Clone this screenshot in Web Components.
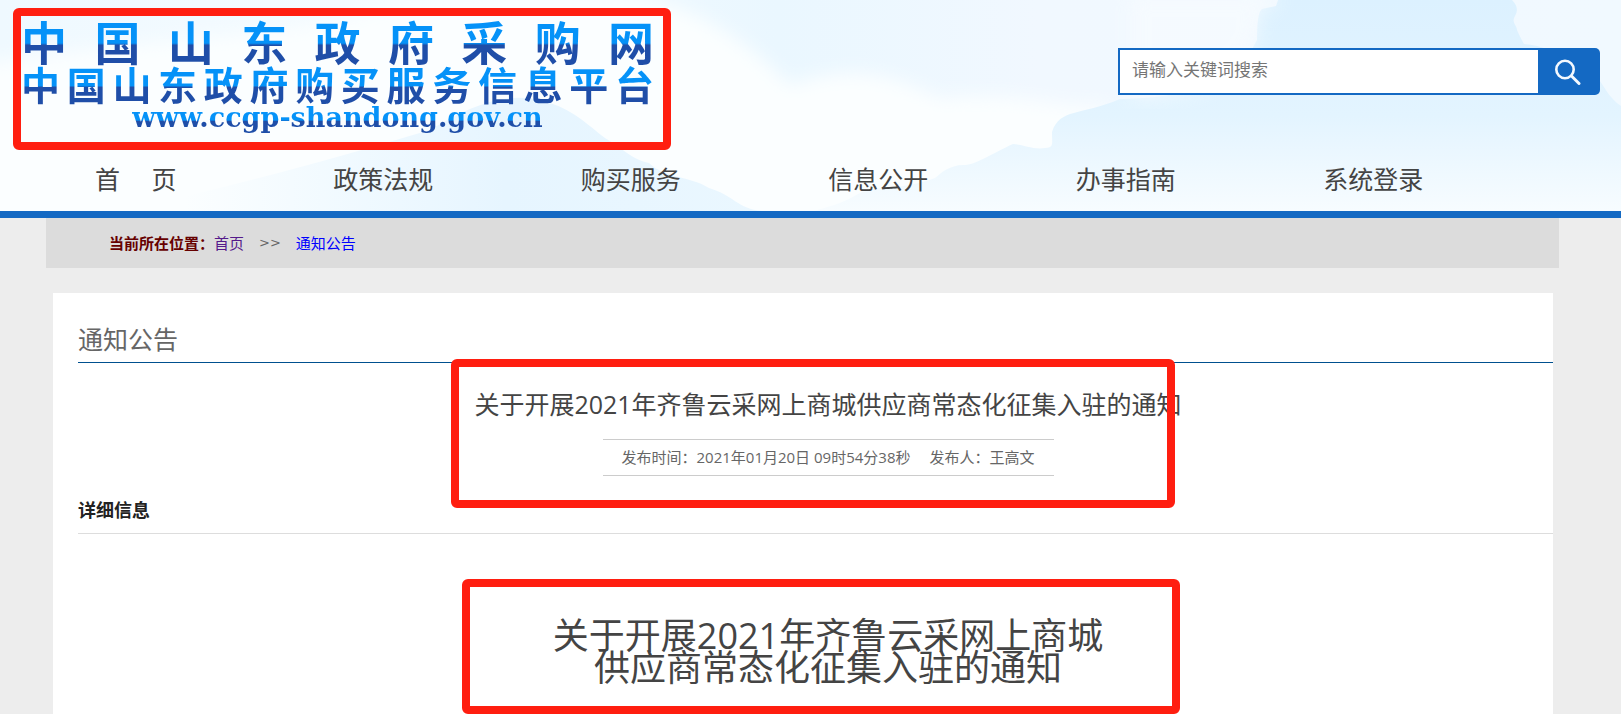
<!DOCTYPE html>
<html lang="zh-CN">
<head>
<meta charset="utf-8">
<title>中国山东政府采购网</title>
<style>
    body {
        margin: 0;
        background: #ededed;
        color: #444;
        font-family: "Open Sans", "Noto Sans CJK SC", sans-serif;
        font-size: 15px;
    }
</style>
</head>
<body>
<procurement-page></procurement-page>

<script>
class CalloutFrame extends HTMLElement {
    constructor() {
        super();
        this.attachShadow({ mode: 'open' });
        this.shadowRoot.innerHTML = `
            <style>
                :host {
                    display: block;
                    box-sizing: border-box;
                    position: absolute;
                    border: 8px solid #ff1e10;
                    border-radius: 6px;
                    pointer-events: none;
                }
            </style>
        `;
    }
}

class SkyBackdrop extends HTMLElement {
    constructor() {
        super();
        this.attachShadow({ mode: 'open' });
        this.shadowRoot.innerHTML = `
            <style>
                :host { display: block; position: absolute; inset: 0; overflow: hidden; }
                svg { display: block; width: 100%; height: 100%; }
            </style>
            <svg viewBox="0 0 1621 211" preserveAspectRatio="none" aria-hidden="true">
                <defs>
                    <linearGradient id="sky" x1="0" x2="1" y1="0" y2="0">
                        <stop offset="0" stop-color="#eff9ff"/>
                        <stop offset="0.25" stop-color="#f5fbff"/>
                        <stop offset="0.48" stop-color="#eaf7ff"/>
                        <stop offset="0.64" stop-color="#f1f8ff"/>
                        <stop offset="1" stop-color="#f1f9ff"/>
                    </linearGradient>
                    <linearGradient id="hill" x1="0" x2="0" y1="0" y2="1">
                        <stop offset="0" stop-color="#dcf1ff"/>
                        <stop offset="0.55" stop-color="#e3f4ff"/>
                        <stop offset="1" stop-color="#f7fcff"/>
                    </linearGradient>
                    <linearGradient id="slope" x1="0" x2="1" y1="0" y2="0">
                        <stop offset="0.1" stop-color="#e6f5ff" stop-opacity="0"/>
                        <stop offset="0.6" stop-color="#e6f5ff"/>
                        <stop offset="1" stop-color="#eaf7ff"/>
                    </linearGradient>
                    <filter id="soft"><feGaussianBlur stdDeviation="9"/></filter>
                </defs>
                <rect width="1621" height="211" fill="url(#sky)"/>
                <path d="M-60 70C120 40 230 40 330 22C450 -10 560 -20 650 0C710 15 750 45 790 85C860 60 900 80 940 98C1020 90 1060 110 1110 105L1080 240H-60Z" fill="#fbfeff" filter="url(#soft)"/>
                <path d="M120 211C220 190 330 160 430 130C470 105 510 90 545 102C570 107 588 125 605 138C625 150 633 160 649 163C664 178 690 176 709 188C733 195 738 209 762 211Z" fill="url(#slope)"/>
                <path d="M1278 0L1276 6L1262 9Q1257 12 1257 40L1252 49C1220 92 1170 98 1120 99C1080 116 1060 108 1052 132C1052 145 1054 147 1045 148C1033 150 1022 144 1013 144C991 154 979 163 966 165C950 164 941 173 935 178C900 191 880 184 858 194C840 205 825 207 815 211H1621V106C1600 91 1604 73 1578 65Q1550 46 1524 44Q1519 35 1517 30C1517 25 1511 23 1515 16Q1520 8 1512 0Z" fill="url(#hill)"/>
                <path d="M1278 -5H1130V98C1170 98 1220 92 1252 49L1257 40Q1257 12 1262 9L1276 6Z" fill="#f8fcff" opacity="0.7" filter="url(#soft)"/>
            </svg>
        `;
    }
}

class SiteLogo extends HTMLElement {
    constructor() {
        super();
        this.attachShadow({ mode: 'open' });
        this.shadowRoot.innerHTML = `
            <style>
                :host {
                    display: block;
                    position: relative;
                    box-sizing: border-box;
                    width: 658px;
                    height: 142px;
                    padding: 6px 17px 0 8px;
                    font-family: "Noto Sans CJK SC", sans-serif;
                    font-weight: 700;
                }
                div {
                    color: transparent;
                    background: linear-gradient(#0592f8 56%, #1f4ea8 60%);
                    -webkit-background-clip: text;
                    background-clip: text;
                    text-align-last: justify;
                    white-space: nowrap;
                }
                .name { font-size: 46px; line-height: 52px; }
                .platform { margin-top: -5px; font-size: 39px; line-height: 44px; }
                .address {
                    margin-top: -4px;
                    font-family: "DejaVu Serif", serif;
                    font-size: 27px;
                    line-height: 34px;
                    text-align-last: center;
                }
                callout-frame { inset: 0; }
            </style>
            <div class="name">中国山东政府采购网</div>
            <div class="platform">中国山东政府购买服务信息平台</div>
            <div class="address">www.ccgp-shandong.gov.cn</div>
            <callout-frame></callout-frame>
        `;
    }
}

class SearchBox extends HTMLElement {
    constructor() {
        super();
        this.attachShadow({ mode: 'open' });
        this.shadowRoot.innerHTML = `
            <style>
                :host { display: block; width: 482px; }
                form { display: flex; height: 47px; margin: 0; }
                input {
                    flex: 1;
                    min-width: 0;
                    box-sizing: border-box;
                    border: 2px solid #1469c3;
                    border-right: 0;
                    padding: 0 12px 4px;
                    background: #fff;
                    color: #444;
                    font: inherit;
                    font-size: 17px;
                    outline: none;
                }
                input::placeholder { color: #757575; }
                button {
                    display: flex;
                    align-items: center;
                    justify-content: center;
                    width: 62px;
                    border: 0;
                    border-radius: 0 5px 5px 0;
                    padding: 0 2px 0 0;
                    background: #1469c3;
                    cursor: pointer;
                }
            </style>
            <form>
                <input type="text" aria-label="搜索" placeholder="请输入关键词搜索">
                <button type="button" aria-label="搜索">
                    <svg width="26" height="26" viewBox="0 0 26 26" fill="none" stroke="#f4f9ff" stroke-width="2.6" stroke-linecap="round">
                        <circle cx="10" cy="10.5" r="8.7"/>
                        <path d="M16.5 17L24 24.5" stroke-width="3"/>
                    </svg>
                </button>
            </form>
        `;
    }
}

class SiteNav extends HTMLElement {
    constructor() {
        super();
        this.attachShadow({ mode: 'open' });
    }

    connectedCallback() {
        const items = ['首&emsp;&nbsp;页', '政策法规', '购买服务', '信息公开', '办事指南', '系统登录'];

        this.shadowRoot.innerHTML = `
            <style>
                :host { display: block; }
                nav {
                    display: grid;
                    grid-template-columns: repeat(6, 1fr);
                    padding: 0 124px 2px 12px;
                }
                a {
                    color: #444;
                    font-size: 25px;
                    line-height: 59px;
                    height: 59px;
                    text-align: center;
                    text-decoration: none;
                }
            </style>
            <nav>${items.map(item => `<a href="#">${item}</a>`).join('')}</nav>
        `;
    }
}

class SiteHeader extends HTMLElement {
    constructor() {
        super();
        this.attachShadow({ mode: 'open' });
        this.shadowRoot.innerHTML = `
            <style>
                :host {
                    display: block;
                    position: relative;
                    border-bottom: 7px solid #1469c3;
                }
                header { position: relative; }
                .top {
                    display: flex;
                    justify-content: space-between;
                    padding: 8px 21px 0 13px;
                }
                search-box { margin-top: 40px; }
            </style>
            <sky-backdrop></sky-backdrop>
            <header>
                <div class="top">
                    <site-logo></site-logo>
                    <search-box></search-box>
                </div>
                <site-nav></site-nav>
            </header>
        `;
    }
}

class BreadCrumb extends HTMLElement {
    constructor() {
        super();
        this.attachShadow({ mode: 'open' });
        this.shadowRoot.innerHTML = `
            <style>
                :host {
                    display: block;
                    margin: 0 62px 0 46px;
                    background: #dcdcdc;
                }
                nav {
                    display: flex;
                    align-items: center;
                    height: 48px;
                    padding: 0 63px 2px;
                }
                strong { color: #600; }
                span {
                    margin: 0 15px;
                    color: #666;
                    font-family: "DejaVu Sans", sans-serif;
                    font-size: 13px;
                }
                a { color: #00f; text-decoration: none; }
                .visited { color: #551a8b; }
            </style>
            <nav>
                <strong>当前所在位置：</strong>
                <a class="visited" href="#">首页</a>
                <span>&gt;&gt;</span>
                <a href="#">通知公告</a>
            </nav>
        `;
    }
}

class NoticeMeta extends HTMLElement {
    static get observedAttributes() {
        return ['time', 'author'];
    }

    constructor() {
        super();
        this.attachShadow({ mode: 'open' });
    }

    attributeChangedCallback() {
        this.render();
    }

    render() {
        const time = this.getAttribute('time') || '';
        const author = this.getAttribute('author') || '';

        this.shadowRoot.innerHTML = `
            <style>
                :host {
                    display: flex;
                    gap: 19px;
                    padding: 0 19px;
                    border: solid #ccc;
                    border-width: 1px 0;
                    color: #666;
                    line-height: 35px;
                }
            </style>
            <span>发布时间：${time}</span>
            <span>发布人：${author}</span>
        `;
    }
}

class NoticePanel extends HTMLElement {
    constructor() {
        super();
        this.attachShadow({ mode: 'open' });
        this.shadowRoot.innerHTML = `
            <style>
                :host {
                    display: block;
                    flex: 1;
                    margin: 25px 68px 0 53px;
                    background: #fff;
                    overflow: hidden;
                }
                /* content is as wide as the panel and runs under its right edge */
                section { width: 100%; margin-left: 25px; }
                h1, h2, h3 { margin: 0; font-weight: 400; }
                h2 {
                    padding-top: 24px;
                    border-bottom: 1px solid #00508f;
                    color: #666;
                    font-size: 25px;
                    line-height: 45px;
                }
                .title, .body {
                    display: flex;
                    flex-direction: column;
                    align-items: center;
                    position: relative;
                    text-align: center;
                }
                .title { padding: 21px 0 12px; }
                h1 { margin-bottom: 15px; font-size: 25px; line-height: 40px; }
                h3 {
                    border-bottom: 1px solid #ddd;
                    color: #222;
                    font-size: 18px;
                    font-weight: 700;
                    line-height: 45px;
                }
                .body {
                    padding: 86px 0 30px;
                    font-size: 36px;
                    line-height: 32px;
                }
                callout-frame { left: 50%; }
                .title callout-frame { top: -4px; width: 724px; height: 149px; margin-left: -377px; }
                .body callout-frame { top: 45px; width: 718px; bottom: 0; margin-left: -366px; }
            </style>
            <section>
                <h2>通知公告</h2>
                <div class="title">
                    <h1><slot name="title"></slot></h1>
                    <slot name="meta"></slot>
                    <callout-frame></callout-frame>
                </div>
                <h3>详细信息</h3>
                <div class="body">
                    <slot></slot>
                    <callout-frame></callout-frame>
                </div>
            </section>
        `;
    }
}

class ProcurementPage extends HTMLElement {
    constructor() {
        super();
        this.attachShadow({ mode: 'open' });
        this.shadowRoot.innerHTML = `
            <style>
                :host {
                    display: flex;
                    flex-direction: column;
                    min-height: 100vh;
                }
            </style>
            <site-header></site-header>
            <bread-crumb></bread-crumb>
            <notice-panel>
                <span slot="title">关于开展2021年齐鲁云采网上商城供应商常态化征集入驻的通知</span>
                <notice-meta slot="meta" time="2021年01月20日 09时54分38秒" author="王高文"></notice-meta>
                <div>关于开展2021年齐鲁云采网上商城<br>供应商常态化征集入驻的通知</div>
            </notice-panel>
        `;
    }
}

customElements.define('callout-frame', CalloutFrame);
customElements.define('sky-backdrop', SkyBackdrop);
customElements.define('site-logo', SiteLogo);
customElements.define('search-box', SearchBox);
customElements.define('site-nav', SiteNav);
customElements.define('site-header', SiteHeader);
customElements.define('bread-crumb', BreadCrumb);
customElements.define('notice-meta', NoticeMeta);
customElements.define('notice-panel', NoticePanel);
customElements.define('procurement-page', ProcurementPage);
</script>
</body>
</html>
